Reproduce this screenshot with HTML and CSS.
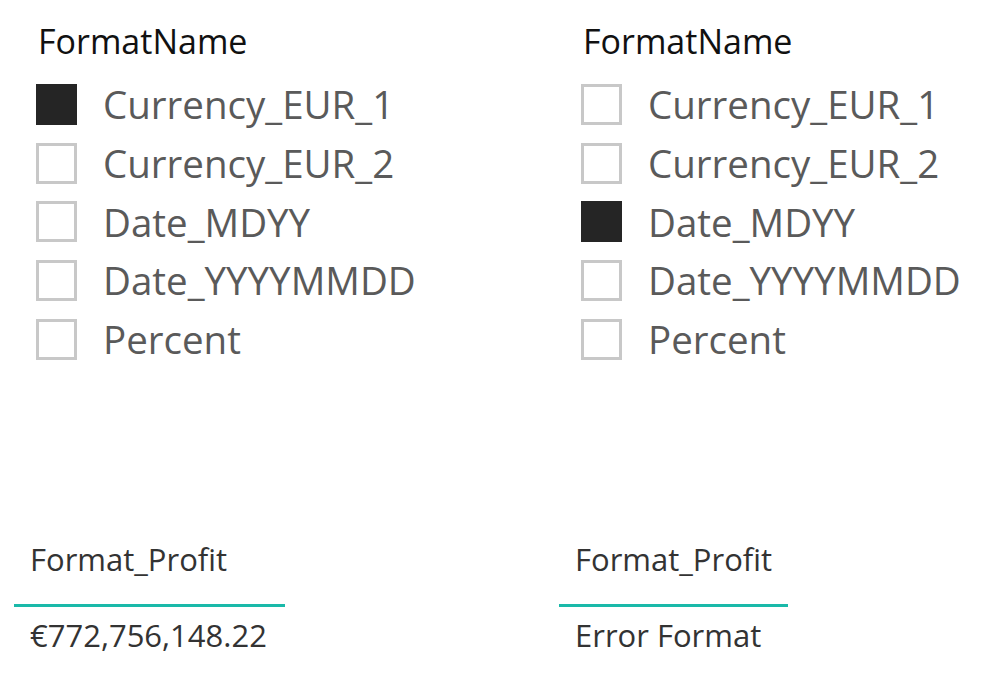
FILE: index.html
```html
<!DOCTYPE html>
<html>
<head>
<meta charset="utf-8">
<link rel="stylesheet" href="styles.css">
</head>
<body>
<div class="page">
  <section class="panel">
    <div class="slicer">
      <div class="slicer-title">FormatName</div>
      <ul class="items">
        <li class="item"><span class="box checked"></span><span class="label">Currency_EUR_1</span></li>
        <li class="item"><span class="box"></span><span class="label">Currency_EUR_2</span></li>
        <li class="item"><span class="box"></span><span class="label">Date_MDYY</span></li>
        <li class="item"><span class="box"></span><span class="label">Date_YYYYMMDD</span></li>
        <li class="item"><span class="box"></span><span class="label">Percent</span></li>
      </ul>
    </div>
    <div class="card card-wide">
      <div class="card-title">Format_Profit</div>
      <div class="card-rule"></div>
      <div class="card-value">€772,756,148.22</div>
    </div>
  </section>
  <section class="panel panel-last">
    <div class="slicer">
      <div class="slicer-title">FormatName</div>
      <ul class="items">
        <li class="item"><span class="box"></span><span class="label">Currency_EUR_1</span></li>
        <li class="item"><span class="box"></span><span class="label">Currency_EUR_2</span></li>
        <li class="item"><span class="box checked"></span><span class="label">Date_MDYY</span></li>
        <li class="item"><span class="box"></span><span class="label">Date_YYYYMMDD</span></li>
        <li class="item"><span class="box"></span><span class="label">Percent</span></li>
      </ul>
    </div>
    <div class="card card-narrow">
      <div class="card-title">Format_Profit</div>
      <div class="card-rule"></div>
      <div class="card-value">Error Format</div>
    </div>
  </section>
</div>
</body>
</html>
```
FILE: styles.css
```css
html, body {
  margin: 0;
  padding: 0;
  background: #ffffff;
}
body {
  font-family: "Open Sans", "Noto Sans", "Liberation Sans", sans-serif;
  width: 982px;
  height: 691px;
  overflow: hidden;
}
.page {
  display: flex;
  padding-left: 14px;
  box-sizing: border-box;
  width: 982px;
}
.panel {
  width: 545px;
  flex: none;
  display: flex;
  flex-direction: column;
}
.panel-last {
  width: auto;
  flex: 1;
  min-width: 0;
}
.slicer {
  padding-left: 22px;
  padding-top: 19px;
}
.slicer-title {
  font-size: 34px;
  line-height: 44px;
  color: #111111;
  padding-left: 2px;
}
.items {
  list-style: none;
  margin: 0;
  padding: 0;
  margin-top: 12px;
}
.item {
  display: flex;
  align-items: center;
  height: 58.7px;
  gap: 26px;
}
.box {
  width: 41px;
  height: 41px;
  box-sizing: border-box;
  border: 3px solid #c8c8c8;
  background: #ffffff;
  flex: none;
}
.box.checked {
  border-color: #252525;
  background: #252525;
}
.label {
  font-size: 38.5px;
  color: #5a5a5a;
  line-height: 48px;
  white-space: nowrap;
}
.card {
  margin-top: 173px;
}
.card-title {
  font-size: 31px;
  line-height: 36px;
  color: #333333;
  padding-left: 16px;
}
.card-rule {
  height: 3px;
  background: #1ab9a9;
  margin-top: 27px;
}
.card-wide .card-rule {
  width: 271px;
}
.card-narrow .card-rule {
  width: 229px;
}
.card-value {
  font-size: 31px;
  line-height: 36px;
  color: #333333;
  padding-left: 16px;
  margin-top: 10px;
}
```
